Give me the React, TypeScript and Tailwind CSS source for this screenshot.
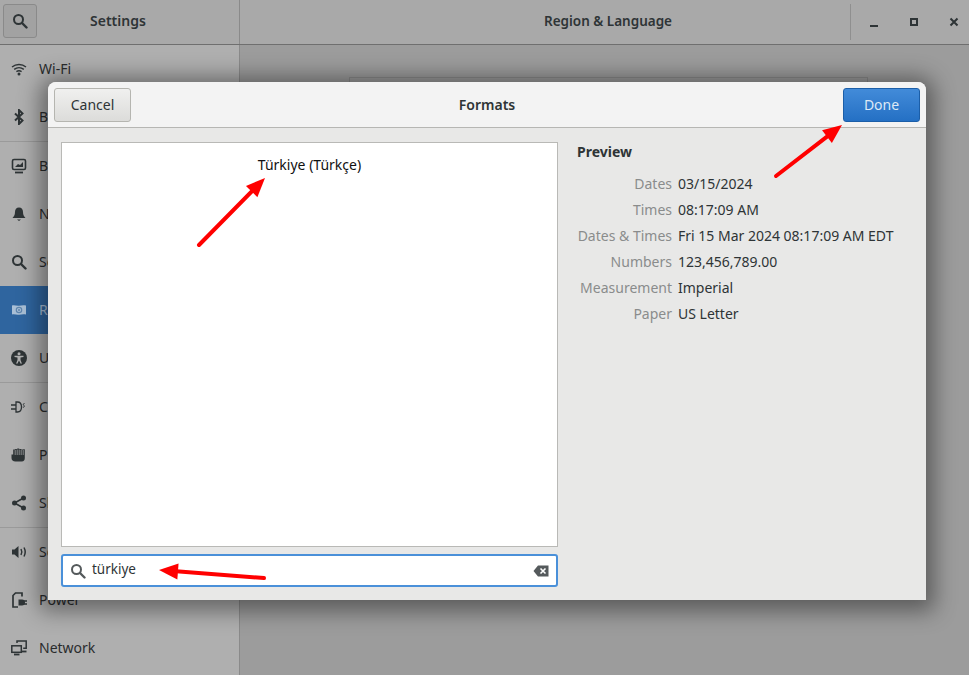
import type { ReactNode } from "react";

const ICON = "#2e3436";

const SearchIcon = ({ color = ICON }: { color?: string }) => (
  <svg width="16" height="16" viewBox="0 0 16 16" fill="none">
    <circle cx="6.5" cy="6.5" r="4.5" stroke={color} strokeWidth="2" />
    <path d="M10 10l4.5 4.5" stroke={color} strokeWidth="2.4" strokeLinecap="round" />
  </svg>
);

const icons: Record<string, ReactNode> = {
  wifi: (
    <svg width="16" height="16" viewBox="0 0 16 16" fill="none" stroke={ICON} strokeWidth="1.4">
      <path d="M1 6c4-3.4 10-3.4 14 0" />
      <path d="M3.2 8.4c2.8-2.2 6.8-2.2 9.6 0" />
      <path d="M5.4 10.6c1.5-1 3.7-1 5.2 0" />
      <circle cx="8" cy="13" r="1.5" fill={ICON} stroke="none" />
    </svg>
  ),
  bluetooth: (
    <svg width="16" height="16" viewBox="0 0 16 16" fill="none" stroke={ICON} strokeWidth="2">
      <path d="M4 4.5l7.5 7L8 15V1l3.5 3.5L4 11.5" />
    </svg>
  ),
  background: (
    <svg width="16" height="16" viewBox="0 0 16 16" fill="none">
      <rect x="1.5" y="1.5" width="13" height="10" rx="1.5" stroke={ICON} strokeWidth="1.6" />
      <path d="M4 9h8V4l-3 3-2-1z" fill={ICON} />
      <path d="M4 14.5h8" stroke={ICON} strokeWidth="1.8" />
    </svg>
  ),
  bell: (
    <svg width="16" height="16" viewBox="0 0 16 16" fill={ICON}>
      <path d="M8 1.5c-2.6 0-4 1.900-4 4.500 0 3-1 4.500-2.500 6h13c-1.500-1.500-2.500-3-2.500-6 0-2.600-1.400-4.500-4-4.500z" />
      <path d="M6 13.500h4L8 15z" />
    </svg>
  ),
  region: (
    <svg width="16" height="16" viewBox="0 0 16 16" fill="#a9bfd6">
      <path d="M1 3.500c2.500-.8 4.500.6 7 .2s4.500-.8 7-.2v9c-2.500-.6-4.500-.2-7 .2s-4.500-1-7-.2z" />
      <circle cx="8" cy="8" r="2.700" fill="none" stroke="#5f86ae" strokeWidth="1.200" />
      <circle cx="8" cy="8" r="1" fill="#5f86ae" />
    </svg>
  ),
  universal: (
    <svg width="16" height="16" viewBox="0 0 16 16">
      <circle cx="8" cy="8" r="8" fill={ICON} />
      <circle cx="8" cy="3.800" r="1.500" fill="#b0b0b0" />
      <path d="M3.500 5.800h9v1.200l-3 .6v2.400l1.400 3.400-1.200.4L8 10.600l-1.700 3.200-1.200-.4 1.400-3.400V7.600l-3-.6z" fill="#b0b0b0" />
    </svg>
  ),
  connectivity: (
    <svg width="16" height="16" viewBox="0 0 16 16" fill="none" stroke={ICON} strokeWidth="1.300">
      <path d="M5 3h1.500c3 0 4 2.500 4 5s-1 5-4 5H5z" />
      <path d="M0 6h5M0 10h5" />
      <path d="M13.500 4.500c-1 0-1.500.6-1 1.400s1.200 1.200.6 2c-.3.400-.8.400-1.300.2" strokeWidth="1" />
    </svg>
  ),
  privacy: (
    <svg width="16" height="16" viewBox="0 0 16 16" fill={ICON}>
      <path d="M.5 7.500h1.700V2.500h2v-.5h2v-.500h2v.500h2v.5h2v-.2h1.600v8.700c0 2-1 3.500-3 3.500H4.500c-2.500 0-4-1.500-4-3.500z" />
      <path d="M4.200 3v5M6.200 2.500v5.500M8.200 2.500v5.500M10.200 3v5M12.200 3v5" stroke="#b0b0b0" strokeWidth=".7" />
    </svg>
  ),
  sharing: (
    <svg width="16" height="16" viewBox="0 0 16 16" fill={ICON} stroke={ICON}>
      <path d="M12.500 3L3.500 8l9 5" fill="none" strokeWidth="1.600" />
      <circle cx="3.500" cy="8" r="2.500" stroke="none" />
      <circle cx="12.500" cy="3" r="2.500" stroke="none" />
      <circle cx="12.500" cy="13" r="2.500" stroke="none" />
    </svg>
  ),
  sound: (
    <svg width="16" height="16" viewBox="0 0 16 16" fill={ICON}>
      <path d="M1 5.500h2.500L7.500 2v12l-4-3.500H1z" />
      <path d="M10 5c1 1.800 1 4.200 0 6" fill="none" stroke={ICON} strokeWidth="1.500" />
      <path d="M13 3.500c1.500 2.800 1.500 6.200 0 9" fill="none" stroke={ICON} strokeWidth="1.500" />
    </svg>
  ),
  power: (
    <svg width="16" height="16" viewBox="0 0 16 16" fill="none">
      <path d="M7 15H2V3.500L4.500 1H11v3.500" stroke={ICON} strokeWidth="1.700" />
      <path d="M7.500 7.500h3.500a3 3 0 0 1 0 6H7.500z" fill={ICON} />
      <path d="M13 9h3M13 12h3" stroke={ICON} strokeWidth="1.300" />
    </svg>
  ),
  network: (
    <svg width="16" height="16" viewBox="0 0 16 16" fill="none" stroke={ICON} strokeWidth="1.500">
      <rect x=".8" y="5.800" width="9.500" height="6.500" />
      <path d="M3 14.500h5.500" strokeWidth="1.800" />
      <path d="M6 3V.9h9.200v7.400h-3" />
      <path d="M11 11.500h4.500" strokeWidth="1.800" />
    </svg>
  ),
};

const groups = [
  [
    ["wifi", "Wi-Fi"],
    ["bluetooth", "Bluetooth"],
  ],
  [
    ["background", "Background"],
    ["bell", "Notifications"],
    ["search", "Search"],
    ["region", "Region & Language"],
    ["universal", "Universal Access"],
  ],
  [
    ["connectivity", "Connectivity"],
    ["privacy", "Privacy"],
    ["sharing", "Sharing"],
  ],
  [
    ["sound", "Sound"],
    ["power", "Power"],
    ["network", "Network"],
  ],
];

const preview = [
  ["Dates", "03/15/2024"],
  ["Times", "08:17:09 AM"],
  ["Dates & Times", "Fri 15 Mar 2024 08:17:09 AM EDT"],
  ["Numbers", "123,456,789.00"],
  ["Measurement", "Imperial"],
  ["Paper", "US Letter"],
];

function SidebarRow({ icon, label }: { icon: string; label: string }) {
  const selected = icon === "region";
  return (
    <div
      className={`h-12 flex items-center gap-[12px] pl-[11px] pb-[1px] text-[14px] ${
        selected ? "bg-[#2f659f] text-[#a9bfd6]" : "text-[#2a2c2d]"
      }`}
    >
      <span className="w-4 h-4 shrink-0 flex">
        {icon === "search" ? <SearchIcon /> : icons[icon]}
      </span>
      <span>{label}</span>
    </div>
  );
}

function Arrow({ x1, y1, x2, y2 }: { x1: number; y1: number; x2: number; y2: number }) {
  const a = Math.atan2(y2 - y1, x2 - x1);
  const back = (d: number, s: number) =>
    `${x2 - d * Math.cos(a) - s * Math.sin(a)},${y2 - d * Math.sin(a) + s * Math.cos(a)}`;
  return (
    <>
      <line
        x1={x1}
        y1={y1}
        x2={x2 - 14 * Math.cos(a)}
        y2={y2 - 14 * Math.sin(a)}
        stroke="#ff0000"
        strokeWidth="4"
        strokeLinecap="round"
      />
      <polygon points={`${x2},${y2} ${back(19, 8)} ${back(19, -8)}`} fill="#ff0000" />
    </>
  );
}

function Dialog() {
  return (
    <div className="absolute left-[48px] top-[82px] w-[878px] h-[518px] rounded-t-[8px] bg-[#e8e8e7] flex flex-col shadow-[0_3px_22px_8px_rgba(0,0,0,0.42)]">
      <div className="h-[46px] shrink-0 rounded-t-[8px] bg-[#f3f3f3] border-b border-[#b6b6b3] flex items-center justify-between px-[6px]">
        <button className="w-[77px] h-[34px] rounded-[3px] border border-[#b5b5b0] bg-gradient-to-b from-[#f0f0ef] to-[#dcdcda] text-[14px] text-[#2e3436]">
          Cancel
        </button>
        <span className="font-semibold text-[14px] text-[#2e3436]">Formats</span>
        <button className="w-[77px] h-[34px] rounded-[3px] border border-[#1b5ea8] bg-gradient-to-b from-[#428bd9] to-[#2470c4] text-[14px] text-[#dde9f6]">
          Done
        </button>
      </div>
      <div className="flex-1 flex pl-[13px] pr-[6px] pt-[14px] gap-[19px]">
        <div className="w-[497px] shrink-0 flex flex-col gap-[7px]">
          <div className="h-[405px] bg-white border border-[#b9b9b6] flex justify-center pt-[12px]">
            <span className="text-[14px] leading-5 text-[#111]">Türkiye (Türkçe)</span>
          </div>
          <div className="h-[33px] rounded-[3px] bg-white border-2 border-[#4a90d9] flex items-center pl-[7px] pr-[7px]">
            <SearchIcon color="#555a5c" />
            <span className="ml-[6px] pb-[2px] text-[13.5px] text-[#2e3436]">türkiye</span>
            <svg className="ml-auto" width="16" height="14" viewBox="0 0 16 14">
              <path d="M5 1.500h10.500v11H5L.5 7z" fill="#555a5c" />
              <path d="M7.500 4.500l5 5M12.500 4.500l-5 5" stroke="#fff" strokeWidth="1.600" />
            </svg>
          </div>
        </div>
        <div className="flex-1 flex flex-col">
          <h2 className="font-bold text-[14px] leading-5 text-[#2e3436] mb-[9px]">Preview</h2>
          <div className="grid grid-cols-[95px_1fr] gap-x-[6px] text-[14px] leading-[26px]">
            {preview.map(([label, value]) => (
              <div key={label} className="contents">
                <span className="text-right text-[#8a8c8c] whitespace-nowrap">{label}</span>
                <span className="text-[#2e3436] whitespace-nowrap">{value}</span>
              </div>
            ))}
          </div>
        </div>
      </div>
    </div>
  );
}

export default function App() {
  return (
    <div className="relative w-[969px] h-[675px] overflow-hidden bg-[#9c9c9c] flex flex-col font-['Noto_Sans',sans-serif]">
      <header className="h-[45px] shrink-0 flex bg-[#a9a9a9] border-b border-[#6f6f6f]">
        <div className="w-[240px] shrink-0 border-r border-[#8a8a8a] flex items-center pl-[3px] pb-[2px]">
          <button className="w-[34px] h-[34px] rounded-[3px] border border-[#8a8a8a] bg-[#a2a2a2] flex items-center justify-center">
            <SearchIcon />
          </button>
          <span className="ml-[53px] pb-[1px] font-semibold text-[14px] text-[#2e3436]">Settings</span>
        </div>
        <div className="flex-1 flex items-center justify-center font-semibold text-[13.5px] text-[#2e3436] pb-[2px] pl-[126px]">
          Region &amp; Language
        </div>
        <div className="w-[119px] shrink-0 flex items-center overflow-hidden border-l border-[#8f8f8f] my-[4px] pl-[3px]">
          <span className="w-[40px] shrink-0 flex justify-center pt-[7px]">
            <span className="w-[8px] h-[2px] bg-[#2e3436]" />
          </span>
          <span className="w-[40px] shrink-0 flex justify-center pb-[1px]">
            <span className="w-[8px] h-[8px] border-2 border-[#2e3436]" />
          </span>
          <span className="w-[40px] shrink-0 flex justify-center pb-[1px]">
            <svg width="10" height="10" viewBox="0 0 10 10">
              <path d="M1.500 1.500l7 7M8.500 1.500l-7 7" stroke="#2e3436" strokeWidth="2" />
            </svg>
          </span>
        </div>
      </header>

      <div className="flex-1 flex min-h-0">
        <nav className="w-[240px] shrink-0 bg-[#afafaf] border-r border-[#8a8a8a] flex flex-col">
          {groups.map((rows, i) => (
            <div key={i} className={i < groups.length - 1 ? "border-b border-[#9a9a9a]" : ""}>
              {rows.map(([icon, label]) => (
                <SidebarRow key={icon} icon={icon} label={label} />
              ))}
            </div>
          ))}
        </nav>
        <main className="flex-1 pt-[32px] pl-[109px] pr-[101px]">
          <div className="h-[400px] border border-[#8a8a8a]" />
        </main>
      </div>

      <Dialog />

      <svg className="absolute inset-0 pointer-events-none" width="969" height="675">
        <Arrow x1={199} y1={245} x2={265} y2={178} />
        <Arrow x1={776} y1={176} x2={842} y2={125} />
        <Arrow x1={264} y1={578} x2={159} y2={570} />
      </svg>
    </div>
  );
}
